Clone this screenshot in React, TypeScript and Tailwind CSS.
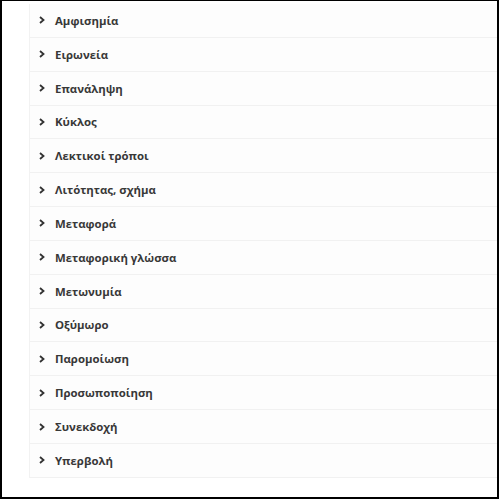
import React from 'react';

const items = [
  'Αμφισημία',
  'Ειρωνεία',
  'Επανάληψη',
  'Κύκλος',
  'Λεκτικοί τρόποι',
  'Λιτότητας, σχήμα',
  'Μεταφορά',
  'Μεταφορική γλώσσα',
  'Μετωνυμία',
  'Οξύμωρο',
  'Παρομοίωση',
  'Προσωποποίηση',
  'Συνεκδοχή',
  'Υπερβολή',
];

const Chevron: React.FC = () => (
  <svg width="6" height="8" viewBox="0 0 6 8" className="shrink-0">
    <path d="M1 1 L4.5 4 L1 7" fill="none" stroke="#333" strokeWidth="1.8" />
  </svg>
);

export default function App() {
  return (
    <div className="w-[500px] h-[500px] bg-white">
      <div className="w-[499px] h-[499px] border-t border-l-2 border-r-2 border-b-2 border-black pt-[3px] pl-[27px]">
        <div className="border-l border-[#f2f2f2]" style={{ fontFamily: '"Open Sans", sans-serif' }}>
          {items.map((label) => (
            <div
              key={label}
              className="h-[33.85px] flex items-center gap-[10px] pl-[9px] border-b border-[#f1f1f1] bg-[#fdfdfd]"
            >
              <Chevron />
              <span className="text-[11.4px] font-bold text-[#383838]">{label}</span>
            </div>
          ))}
        </div>
      </div>
    </div>
  );
}
